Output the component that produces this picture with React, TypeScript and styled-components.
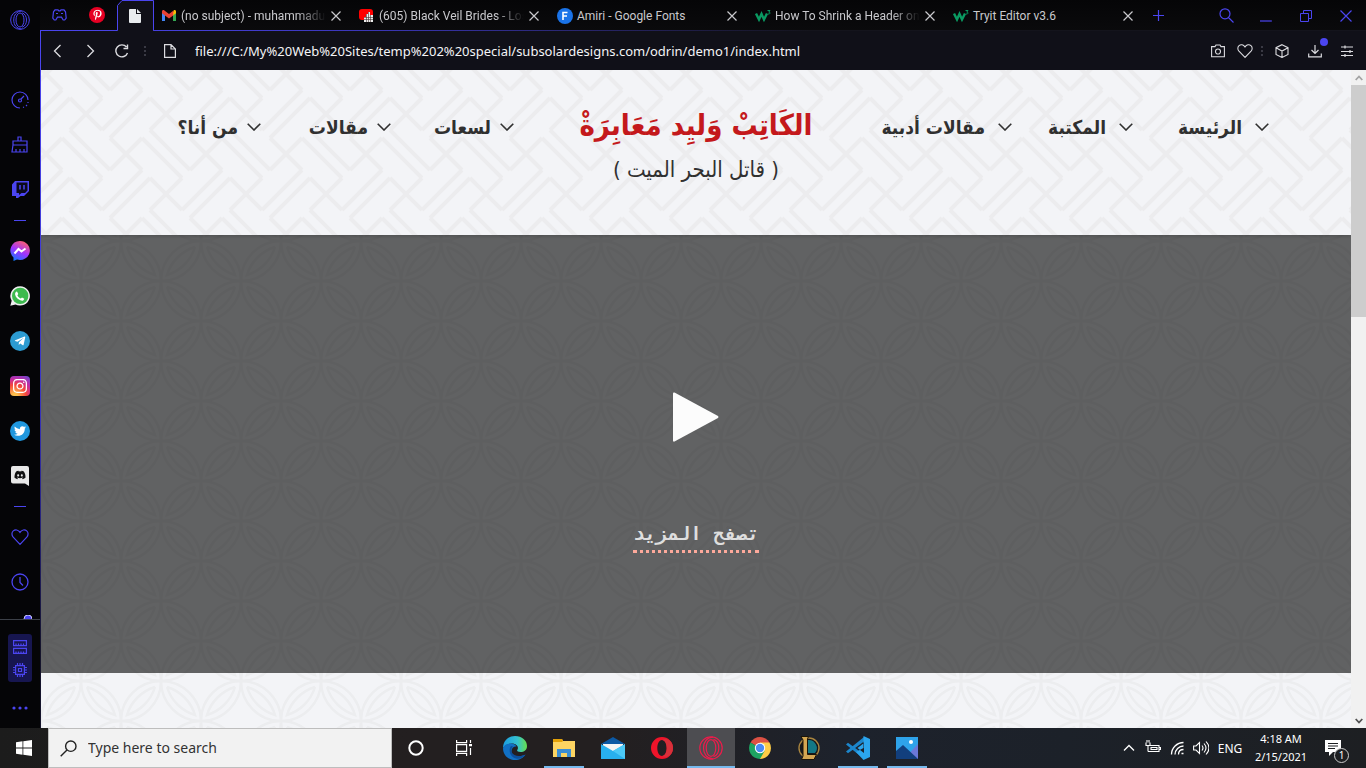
import React from "react";
import styled, { createGlobalStyle, css } from "styled-components";
import {
  FaWhatsapp, FaTelegramPlane, FaInstagram, FaTwitter, FaDiscord, FaPinterestP,
} from "react-icons/fa";

const ui = `"Noto Sans", "Open Sans", sans-serif`;
const violet = "#4b45f0";

const Global = createGlobalStyle`
  *, *::before, *::after { box-sizing: border-box; }
  html, body { margin: 0; height: 100%; background: #050507; }
  #root { height: 100%; }
  body { font-family: ${ui}; font-size: 12px; overflow: hidden; }
  button { font: inherit; color: inherit; background: none; border: 0; padding: 0; margin: 0; cursor: pointer; }
  svg { display: block; flex: none; }
  a { color: inherit; text-decoration: none; }
`;

const Screen = styled.div`display: flex; flex-direction: column; height: 100vh;`;
const Browser = styled.div`flex: 1; min-height: 0; display: flex;`;
const Main = styled.div`flex: 1; min-width: 0; display: flex; flex-direction: column;`;

/* ---------- sidebar ---------- */
const Sidebar = styled.aside`
  width: 41px; flex: none; display: flex; flex-direction: column; color: ${violet};
  background: linear-gradient(#4b45f0, #3a35c8 50%, #15142c 85%) right 0 top 30px / 1px 100% no-repeat, #050507;
`;
const SideTop = styled.div`height: 77px; width: 40px; display: flex; justify-content: center; padding-top: 10px; flex: none;`;
const SideList = styled.nav`flex: 1; min-height: 0; overflow: hidden; width: 40px;`;
const SideButton = styled.button`display: flex; width: 40px; height: 45px; align-items: center; justify-content: center;`;
const Dash = styled.div`
  height: 16px; display: flex; align-items: center; justify-content: center;
  &::before { content: ""; width: 12px; height: 1px; background: ${violet}; }
`;
const SideFoot = styled.div`
  width: 40px; height: 109px; flex: none; border-top: 1px solid #3c4048; padding-top: 14px;
  display: flex; flex-direction: column; align-items: center;
`;
const GxPanel = styled.button`
  width: 24px; height: 48px; border-radius: 3px; background: #171650;
  display: flex; flex-direction: column; align-items: center; justify-content: center; gap: 9px;
`;
const More = styled.button`flex: 1; width: 40px; padding-top: 6px; display: flex; align-items: center; justify-content: center;`;
const Disc = styled.span<{ $bg: string; $square?: boolean }>`
  width: 20px; height: 20px; border-radius: ${(p) => (p.$square ? "4px" : "50%")}; background: ${(p) => p.$bg};
  display: flex; align-items: center; justify-content: center; color: #fff;
`;

/* ---------- tabs ---------- */
const TabStrip = styled.div`
  height: 31px; flex: none; display: flex; color: #c9c9cd; margin-left: -1px;
  background: linear-gradient(90deg, #4b45f0, #3b36b8 25%, #14141c 58%) bottom / 100% 1px no-repeat, linear-gradient(#050507, #0a0a0c);
`;
const Pinned = styled.button`width: 38px; height: 30px; display: flex; align-items: center; justify-content: center; color: ${violet};`;
const ActiveTab = styled(Pinned)`
  height: 31px; position: relative;
  > svg:first-child { position: absolute; inset: 0; }
  > svg:last-child { position: relative; }
`;
const Tab = styled.div`width: 198px; height: 31px; padding: 0 10px 0 7px; display: flex; align-items: center; gap: 4px; min-width: 0; flex: 0 1 198px;`;
const TabIcon = styled.span`width: 16px; flex: none; display: flex; justify-content: center;`;
const TabTitle = styled.span<{ $fade?: boolean }>`
  flex: 1; min-width: 0; white-space: nowrap; font: 12px/18px Roboto, ${ui};
  ${(p) => p.$fade && css`mask-image: linear-gradient(90deg, #000 80%, transparent);`}
`;
const IconButton = styled.button<{ $w?: number; $color?: string }>`
  width: ${(p) => p.$w ?? 12}px; color: ${(p) => p.$color ?? "inherit"};
  align-self: stretch; display: flex; align-items: center; justify-content: center; flex: none;
`;
const WindowButtons = styled.div`margin-left: auto; display: flex; color: ${violet};`;

const AddressBar = styled.div`height: 39px; flex: none; background: #101018; display: flex; align-items: center; color: #dcdce0; padding: 0 4px 0 1px;`;
const Url = styled.input`
  flex: 1; min-width: 0; background: none; border: 0; outline: 0; padding: 0; margin-left: 7px; color: #f4f4f6;
  font-family: ${ui}; font-size: 13px; line-height: 20px;
`;
const DownloadBadge = styled.span`position: relative; &::after { content: ""; position: absolute; top: -6px; right: -6px; width: 8px; height: 8px; border-radius: 50%; background: ${violet}; }`;

/* ---------- page ---------- */
const Viewport = styled.div`flex: 1; min-height: 0; display: flex;`;
const Page = styled.div`flex: 1; min-width: 0; background: #f3f4f7; overflow: hidden; display: flex; flex-direction: column;`;
const Backdrop = styled.svg`position: absolute; inset: 0; width: 100%; height: 100%;`;
const Header = styled.header`
  position: relative; z-index: 1; height: 165px; flex: none; display: grid; grid-template-columns: 1fr 232px 1fr; padding-top: 30px;
  color: #303030; box-shadow: 0 1px 4px rgba(0, 0, 0, 0.2);
`;
const Menu = styled.nav<{ $side: "left" | "right" }>`
  position: relative; display: flex; gap: 47px; height: 54px; align-items: center; direction: ltr;
  ${(p) => (p.$side === "left" ? css`justify-content: flex-end; padding-right: 66px;` : css`padding-left: 64px;`)}
`;
const MenuLink = styled.a<{ $w: number; $wide?: boolean }>`
  width: ${(p) => p.$w}px; display: flex; align-items: center; justify-content: flex-end; gap: ${(p) => (p.$wide ? 13 : 9)}px;
  font: bold 19px/30px "DejaVu Sans Condensed", "DejaVu Sans", sans-serif; white-space: nowrap;
`;
const Brand = styled.a`position: relative; display: flex; flex-direction: column; align-items: center; white-space: nowrap;`;
const BrandName = styled.span`font: bold 29px/50px "DejaVu Sans Condensed", "DejaVu Sans", sans-serif; color: #c4191c;`;
const BrandSub = styled.span`font: 22px/40px "DejaVu Sans Condensed", "DejaVu Sans", sans-serif;`;
const Content = styled.main`position: relative; flex: 1; min-height: 0;`;
const Hero = styled.section`
  position: relative; height: 438px; background: rgba(0, 0, 0, 0.6);
  display: flex; flex-direction: column; align-items: center; padding-top: 157px; gap: 74px;
`;
const MoreLink = styled.a`
  font: bold 19px/34px "DejaVu Sans Mono", monospace; color: #dedede; border-bottom: 3px dotted #fda99b; white-space: nowrap;
`;
const Scrollbar = styled.div`width: 15px; flex: none; background: #f1f1f1; display: flex; flex-direction: column; color: #a3a3a3;`;
const ScrollArrow = styled.button<{ $dark?: boolean }>`
  height: 15px; display: flex; align-items: center; justify-content: center; color: ${(p) => (p.$dark ? "#505050" : "inherit")};
`;
const Track = styled.div`flex: 1; &::before { content: ""; display: block; height: 37%; background: #cdcdcd; }`;

/* ---------- taskbar ---------- */
const Taskbar = styled.footer`
  height: 40px; flex: none; display: flex; color: #fff;
  background: linear-gradient(90deg, #1c1c1c, #231f20 30%, #231f20 45%, #1d222c 62%, #1c2129 78%, #1d1f22);
`;
const StartButton = styled.button`width: 48px; display: flex; align-items: center; justify-content: center;`;
const SearchBox = styled.label`
  width: 344px; background: #f2f2f2; border: 1px solid #bdbdbd; display: flex; align-items: center; padding-left: 11px; gap: 11px; color: #222;
`;
const SearchInput = styled.input`
  flex: 1; min-width: 0; border: 0; outline: 0; padding: 0; background: none; font: 14px/20px ${ui};
  &::placeholder { color: #333; opacity: 1; }
`;
const Apps = styled.div`display: flex; gap: 1px; margin-left: 3px;`;
const AppButton = styled.button<{ $open?: boolean; $active?: boolean }>`
  width: 48px; position: relative; display: flex; align-items: center; justify-content: center;
  background: ${(p) => (p.$active ? "#4d4d51" : "none")};
  ${(p) => (p.$open || p.$active) && css`
    &::after { content: ""; position: absolute; bottom: 0; height: 2px; left: ${p.$active ? 0 : 4}px; right: ${p.$active ? 0 : 4}px; background: #76b9ed; }
  `}
`;
const Tray = styled.div`margin-left: auto; display: flex; align-items: center; padding-right: 15px;`;
const TrayButton = styled.button<{ $w: number }>`width: ${(p) => p.$w}px; height: 40px; display: flex; align-items: center; justify-content: center; position: relative;`;
const Clock = styled.button`width: 68px; font-size: 11px; line-height: 18px; text-align: center; white-space: nowrap;`;
const Count = styled.span`
  position: absolute; right: 2px; bottom: 5px; width: 15px; height: 15px; border-radius: 50%; background: #1d1f22; border: 1px solid #ccc;
  font-size: 10px; line-height: 13px; text-align: center;
`;

/* ---------- drawings ---------- */
type LineProps = { d: string; size?: number; w?: number; box?: number };
const Line = ({ d, size = 16, w = 1, box }: LineProps) => (
  <svg width={size} height={size} viewBox={`0 0 ${box ?? size} ${box ?? size}`} fill="none" stroke="currentColor" strokeWidth={w}><path d={d} /></svg>
);
const Cross = ({ size = 10 }: { size?: number }) => <Line size={size} d={`M.5 .5 L${size - 0.5} ${size - 0.5} M${size - 0.5} .5 L.5 ${size - 0.5}`} w={1.2} />;
const Chevron = () => (
  <svg width="14" height="8" viewBox="0 0 14 8" fill="none" stroke="#303030" strokeWidth="1.6"><path d="M.7.7 7 7 13.3.7" /></svg>
);
const GxLogo = ({ size, color }: { size: number; color: string }) => (
  <svg width={size} height={size} viewBox="0 0 24 24" fill="none" stroke={color} strokeWidth="1.2">
    <circle cx="12" cy="12" r="11.2" /><ellipse cx="12" cy="12" rx="4.800" ry="8.400" />
    <path d="M14 1.200C8 1.500 4.500 6 4.500 12S8 22.500 14 22.800M14.500 3.400c3.500 1 5.300 4.600 5.300 8.600s-1.800 7.600-5.300 8.600" />
  </svg>
);
const Heart = ({ size }: { size: number }) => <Line size={size} box={18} w={1.2} d="M9 16.300 2.200 9.200C.4 7.200.6 4.300 2.300 2.900 4.300 1.200 7.300 1.700 9 4.400c1.700-2.700 4.700-3.200 6.700-1.500 1.700 1.400 1.900 4.300.1 6.300Z" />;
const Colon = ({ width }: { width: number }) => <svg width={width} height="12" viewBox={`${1 - width / 2} 0 ${width} 12`} fill="#3a3a44"><path d="M0 1h2v2H0zM0 5h2v2H0zM0 9h2v2H0z" /></svg>;
const W3 = () => (
  <svg width="16" height="14" viewBox="0 0 16 14" fill="none" stroke="#0a9a62">
    <path d="M1 4.500 4 10.500 6.500 5 9 10.500 12 4.500" strokeWidth="2.400" /><path d="M12.500 1.500h2.500l-1.200 1.600c1.800 0 1.800 2.200-.9 1.900" strokeWidth="1" />
  </svg>
);
const Gmail = () => (
  <svg width="14" height="11" viewBox="0 0 14 11"><path d="M0 1.500V11h3V5z" fill="#4285f4" /><path d="M14 1.500V11h-3V5z" fill="#34a853" /><path d="M11 2.500V5.500L14 3.300V1.500C14 .2 12.500-.4 11.600.5z" fill="#fbbc04" /><path d="M0 1.500C0 .2 1.500-.4 2.400.5L7 4l4.200-3.200V5.500L7 8.600 0 3.300z" fill="#ea4335" /></svg>
);
const YouTube = () => (
  <svg width="16" height="14" viewBox="0 0 16 14"><rect width="14" height="11" rx="3" fill="#f00" /><path d="M5 13V8h2V5h2V3h2v3h3v7z" fill="#eee" /><path d="M5 8.500h9M5 10.500h9M7.500 5v8M9.500 3v10M11.500 6v7" stroke="#433" strokeWidth=".6" /></svg>
);

/* One hooked cross and its mirror image, repeated on a diagonal lattice, give the interlocking key fret. */
const fret = "M-16-16 16 16M16-16-16 16M16 16 56-24M16-16-24-56M-16-16-56 24M-16 16 24 56";
const fretMirror = "M24 24 56 56M56 24 24 56";
const Weave = () => (
  <Backdrop aria-hidden="true">
    <defs>
      <pattern id="weave" width="80" height="80" patternUnits="userSpaceOnUse" patternTransform="translate(45 44)">
        <g fill="none" stroke="#ececee" strokeWidth="4">
          {[0, 80].flatMap((x) => [0, 80].map((y) => <path key={`${x}-${y}`} d={fret} transform={`translate(${x} ${y})`} />))}
          <path d={fretMirror} />
        </g>
      </pattern>
    </defs>
    <rect width="100%" height="100%" fill="url(#weave)" />
  </Backdrop>
);
const Petals = () => (
  <Backdrop aria-hidden="true">
    <defs>
      <pattern id="petals" width="80" height="80" patternUnits="userSpaceOnUse" patternTransform="translate(0 6)">
        <g fill="none" stroke="#ecedef" strokeWidth="2.500">
          {[[0, 0, 0], [40, 40, 90], [80, 0, 90], [40, 40, 0]].map(([x, y, r], i) => (
            <g key={i} transform={`translate(${x} ${y}) rotate(${r})`}>
              <path d="M0 0A40 40 0 0 1 40 40A40 40 0 0 1 0 0M6 6A42 42 0 0 1 34 34A42 42 0 0 1 6 6" />
            </g>
          ))}
        </g>
      </pattern>
    </defs>
    <rect width="100%" height="100%" fill="url(#petals)" />
  </Backdrop>
);

const tabs = [
  { title: "(no subject) - muhammadu", icon: <Gmail />, fade: true },
  { title: "(605) Black Veil Brides - Los", icon: <YouTube />, fade: true },
  { title: "Amiri - Google Fonts", icon: <svg width="16" height="16" viewBox="0 0 16 16"><circle cx="8" cy="8" r="8" fill="#1a73e8" /><path d="M6 12V4.500h4.500M6 8h4" stroke="#fff" strokeWidth="1.600" fill="none" /></svg> },
  { title: "How To Shrink a Header on", icon: <W3 />, fade: true },
  { title: "Tryit Editor v3.6", icon: <W3 /> },
];

export default function App() {
  return (
    <Screen>
      <Global />
      <Browser>
        <Sidebar>
          <SideTop><GxLogo size={20} color={violet} /></SideTop>
          <SideList aria-label="Sidebar">
            <SideButton aria-label="Speed dial"><Line size={18} w={1.2} d="M9 17A8 8 0 1 1 17 9M17 11v1M16 14l-1 1M13 16l-1 .5M10 8l3-3M10.500 9.500a1.500 1.500 0 1 1-3 0a1.500 1.500 0 0 1 3 0" /></SideButton>
            <SideButton aria-label="Cleaner"><Line size={18} w={1.2} d="M7 5V1h3v4M2 5h14v4H2zM2 9 1 16h15V9M5 16v-3M9 16v-3M13 16v-3" /></SideButton>
            <SideButton aria-label="Twitch">
              <svg width="17" height="17" viewBox="0 0 17 17"><path d="M3 0h14v10l-5 5H8.500L6 17H4v-2H0V3.500z" fill={violet} /><path d="M4.500 1.500h11v8L13 12H9.500L7 14v-2H4.500z" fill="#0b0a1c" /><path d="M8 4v4.500M12 4v4.500" stroke={violet} strokeWidth="1.500" /></svg>
            </SideButton>
            <Dash />
            <SideButton aria-label="Messenger">
              <svg width="20" height="20" viewBox="0 0 20 20"><defs><linearGradient id="ms" x1=".2" y1="1" x2=".7" y2="0"><stop stopColor="#0a7cff" /><stop offset=".5" stopColor="#a033ff" /><stop offset="1" stopColor="#ff5f70" /></linearGradient></defs><path d="M10 0a10 9.500 0 1 1-3 18.600L3.500 20V16.500A9.500 9.500 0 0 1 10 0" fill="url(#ms)" /><path d="m4.500 12.500 4-4.500 3 2.500 4-3" stroke="#fff" strokeWidth="2" fill="none" /></svg>
            </SideButton>
            <SideButton aria-label="WhatsApp">
              <svg width="20" height="20" viewBox="0 0 20 20"><path d="M10.200.2a9.700 9.700 0 1 1-4.700 18.200L.3 19.800 1.700 14.800A9.700 9.700 0 0 1 10.200.2" fill="#eee" /><circle cx="10.200" cy="9.900" r="8.200" fill="#3dba4e" /><path d="M7 5.500 8.300 8l-.9 1.200c.8 1.700 1.800 2.600 3.400 3.300l1.200-1 2.300 1.200c-.3 1.600-1.700 2.300-3.300 1.900-3-.8-5.400-3.300-5.900-6C4.900 7 5.700 5.700 7 5.500" fill="#fff" /></svg>
            </SideButton>
            <SideButton aria-label="Telegram"><Disc $bg="#2c9bd1"><FaTelegramPlane size={12} /></Disc></SideButton>
            <SideButton aria-label="Instagram"><Disc $square $bg="radial-gradient(circle at 25% 100%, #fdc04d 10%, #f5463c 45%, #c32aa3 68%, #5b4fd6)"><FaInstagram size={16} /></Disc></SideButton>
            <SideButton aria-label="Twitter"><Disc $bg="#1f97de"><FaTwitter size={12} /></Disc></SideButton>
            <SideButton aria-label="Discord">
              <svg width="18" height="20" viewBox="0 0 18 20"><path d="M2 0h14a2 2 0 0 1 2 2v18l-4-2.500H2a2 2 0 0 1-2-2V2a2 2 0 0 1 2-2" fill="#e8e8e8" /><g transform="translate(3 3)"><FaDiscord size={12} color="#111" /></g></svg>
            </SideButton>
            <Dash />
            <SideButton aria-label="Favourites"><Heart size={18} /></SideButton>
            <SideButton aria-label="History"><Line size={18} w={1.3} d="M17 9A8 8 0 1 1 1 9a8 8 0 0 1 16 0M9 4v5.500l3 3" /></SideButton>
            <SideButton aria-label="Downloads">
              <svg width="24" height="24" viewBox="0 0 24 24"><path d="M11 4v14m-4-4 4 4 4-4" stroke={violet} fill="none" /><circle cx="20" cy="4" r="4" fill="#4b45f0" stroke="#c8c8f0" /></svg>
            </SideButton>
          </SideList>
          <SideFoot>
            <GxPanel aria-label="GX Control">
              <Line size={14} w={1.2} d="M.6.6h12.800v5H.6zM.6 8.400h12.800v5H.6zM3 5.500v-2M5.500 5.500v-2M8 5.500v-2M10.500 5.500v-2M3 13.500v-2M5.500 13.500v-2M8 13.500v-2M10.500 13.500v-2" />
              <Line size={14} w={1.2} d="M2.600 2.600h8.800v8.800H2.600zM5.500 5.500h3v3h-3zM4.500 0v2.500M7 0v2.500M9.500 0v2.500M4.500 11.500V14M7 11.500V14M9.500 11.500V14M0 4.500h2.500M0 7h2.500M0 9.500h2.500M11.500 4.500H14M11.500 7H14M11.500 9.500H14" />
            </GxPanel>
            <More aria-label="More"><svg width="16" height="4" fill={violet}><circle cx="2" cy="2" r="1.600" /><circle cx="8" cy="2" r="1.600" /><circle cx="14" cy="2" r="1.600" /></svg></More>
          </SideFoot>
        </Sidebar>

        <Main>
          <TabStrip>
            <Pinned aria-label="GX Corner">
              <svg width="15" height="12" viewBox="0 0 15 12" fill="none" stroke="currentColor" strokeWidth="1.200"><path d="M3 .8h3l.8 1h1.400l.8-1h3l1.500 2 .7 6.200-1.500 2h-1.500L9.500 8.200h-4L3.800 11H2.300L.8 9l.7-6.200zM4 4.500h2M9 4.500h2" /></svg>
            </Pinned>
            <Pinned aria-label="Pinterest"><svg width="16" height="16" viewBox="0 0 16 16"><circle cx="8" cy="8" r="8" fill="#e60023" /><g transform="translate(3 2.500)"><FaPinterestP size={11} color="#fff" /></g></svg></Pinned>
            <ActiveTab aria-label="index.html">
              <svg width="38" height="31" viewBox="0 0 38 31"><path d="M1 31V5.500L5.500.5H37.500V31" fill="#101018" /><path d="M0 30.500h1.500V5.500L6 .5H37.500v30H38" fill="none" stroke={violet} /></svg>
              <svg width="12" height="14" viewBox="0 0 12 14"><path d="M1 0h6v5h5v8a1 1 0 0 1-1 1H1a1 1 0 0 1-1-1V1a1 1 0 0 1 1-1M8 0l4 4H8z" fill="#e9ecef" /></svg>
            </ActiveTab>
            {tabs.map((t) => (
              <Tab key={t.title}>
                <TabIcon>{t.icon}</TabIcon>
                <TabTitle $fade={t.fade}>{t.title}</TabTitle>
                <IconButton aria-label="Close tab"><Cross /></IconButton>
              </Tab>
            ))}
            <IconButton $w={29} $color={violet} aria-label="New tab"><Line size={11} w={1.200} d="M5.500 0v11M0 5.500h11" /></IconButton>
            <WindowButtons>
              <IconButton $w={40} aria-label="Search tabs"><Line size={15} w={1.2} d="M11 5.800a5 5 0 1 1-10 0a5 5 0 0 1 10 0M9.500 9.500 14.500 14.500" /></IconButton>
              <IconButton $w={40} aria-label="Minimise"><Line size={12} w={1.2} d="M0 11h12" /></IconButton>
              <IconButton $w={40} aria-label="Restore"><Line size={12} d="M.5 3.500h8v8h-8zM3.500 3.500v-3h8v8h-3" /></IconButton>
              <IconButton $w={40} aria-label="Close"><Cross size={12} /></IconButton>
            </WindowButtons>
          </TabStrip>

          <AddressBar>
            <IconButton $w={32} aria-label="Back"><Line size={14} w={1.3} d="M9.500 1 3.500 7l6 6" /></IconButton>
            <IconButton $w={32} aria-label="Forward"><Line size={14} w={1.3} d="M4.500 1l6 6-6 6" /></IconButton>
            <IconButton $w={32} aria-label="Reload"><Line size={14} w={1.4} d="M12.500 9A6 6 0 1 1 11.500 3M12.500.5V4.500H8.500" /></IconButton>
            <Colon width={14} />
            <IconButton $w={36} aria-label="Page information"><Line size={14} w={1.2} d="M1.600.6h6.400l4.400 4.400v8.400H1.600zM8 .6V5h4.400" /></IconButton>
            <Url aria-label="Address" defaultValue="file:///C:/My%20Web%20Sites/temp%202%20special/subsolardesigns.com/odrin/demo1/index.html" />
            <IconButton $w={28} aria-label="Snapshot"><Line size={14} w={1.1} d="M.6 2.600h3.400l1-1.600h4l1 1.600h3.400v10.200H.6zM9.500 7.500a2.500 2.500 0 1 1-5 0a2.500 2.500 0 0 1 5 0" /></IconButton>
            <IconButton $w={26} aria-label="Bookmark"><Heart size={16} /></IconButton>
            <Colon width={8} />
            <IconButton $w={32} aria-label="Extensions"><Line size={14} w={1.1} d="M7 .7l6 3v6.800l-6 3-6-3V3.700zM1 3.700l6 3.300 6-3.300M7 7v6.500" /></IconButton>
            <IconButton $w={34} aria-label="Downloads"><DownloadBadge><Line size={14} w={1.200} d="M7 1v8.500M3.500 6 7 9.500 10.500 6M.7 9.500v3.400h12.600V9.500" /></DownloadBadge></IconButton>
            <IconButton $w={30} aria-label="Easy setup"><Line size={12} d="M0 2h12M0 6.500h12M0 10.500h12M4 .5v3M9 5v3M4 9v3" w={1.200} /></IconButton>
          </AddressBar>

          <Viewport>
            <Page lang="ar">
              <Header>
                <Weave />
                <Menu $side="left">
                  <MenuLink href="#about" $w={80}>من أنا؟<Chevron /></MenuLink>
                  <MenuLink href="#articles" $w={83}>مقالات<Chevron /></MenuLink>
                  <MenuLink href="#stings" $w={76}>لسعات<Chevron /></MenuLink>
                </Menu>
                <Brand href="#home"><BrandName>الكَاتِبْ وَليِد مَعَابِرَةْ</BrandName><BrandSub dir="rtl">( قاتل البحر الميت )</BrandSub></Brand>
                <Menu $side="right">
                  <MenuLink href="#literary" $w={136} $wide>مقالات أدبية<Chevron /></MenuLink>
                  <MenuLink href="#library" $w={74} $wide>المكتبة<Chevron /></MenuLink>
                  <MenuLink href="#main" $w={89} $wide>الرئيسة<Chevron /></MenuLink>
                </Menu>
              </Header>
              <Content>
                <Petals />
                <Hero>
                  <button aria-label="Play"><svg width="46" height="50" viewBox="0 0 46 50"><path d="M0 1.500Q0 0 1.500.5L45 24Q46 25 45 26L1.500 49.500Q0 50 0 48.500z" fill="#fcfcfc" /></svg></button>
                  <MoreLink href="#more" dir="rtl">تصفح المزيد</MoreLink>
                </Hero>
              </Content>
            </Page>
            <Scrollbar>
              <ScrollArrow aria-label="Scroll up"><Line size={8} w={1.800} d="M.7 6 4 2.500 7.300 6" /></ScrollArrow>
              <Track />
              <ScrollArrow aria-label="Scroll down" $dark><Line size={8} w={1.800} d="M.7 2 4 5.500 7.300 2" /></ScrollArrow>
            </Scrollbar>
          </Viewport>
        </Main>
      </Browser>

      <Taskbar>
        <StartButton aria-label="Start"><svg width="16" height="16" viewBox="0 0 16 16" fill="#fff"><path d="M0 2.200 6.500 1.300V7.600H0zM7.300 1.200 16 0v7.600H7.300zM0 8.400h6.500v6.300L0 13.800zM7.300 8.400H16V16l-8.700-1.200z" /></svg></StartButton>
        <SearchBox>
          <Line size={17} w={1.400} d="M16 6.200a5.200 5.200 0 1 1-10.400 0a5.200 5.200 0 0 1 10.400 0M7 10 .7 16.300" />
          <SearchInput aria-label="Search" placeholder="Type here to search" />
        </SearchBox>
        <StartButton aria-label="Cortana"><svg width="16" height="16"><circle cx="8" cy="8" r="6.700" fill="none" stroke="#fff" strokeWidth="2" /></svg></StartButton>
        <StartButton aria-label="Task view"><Line size={16} w={1.200} d="M.6 0v2.600h10V0M.6 4.600h10v6.800H.6zM.6 16v-2.600h10V16M14.500 0v3M14.500 8v7M13 4.600h3M13 5.600h3" /></StartButton>
        <Apps>
          <AppButton aria-label="Edge"><svg width="24" height="24" viewBox="0 0 24 24"><defs><linearGradient id="e1" x2="1"><stop stopColor="#1b9de2" /><stop offset=".6" stopColor="#35c1d0" /><stop offset="1" stopColor="#66e04c" /></linearGradient></defs><path d="M0 12C0 5 5 0 12 0s12 4.500 12 10c0 4-3 6-6.500 6-3 0-4-1-3-2.500C16 11 13.500 7.500 9 7.500 4 7.500 1 10 0 12" fill="url(#e1)" /><path d="M0 12c1-3 4-4.500 8-4.500 3 0 5 1.500 5.500 3C11 10 8.500 12 8.500 15c0 4 4 6 8 5.500 3-.4 5-1.500 6-2C20.500 22 16.500 24 12 24 5 24 0 19 0 12" fill="#1170c4" /><path d="M8 10c-3 4-1 11 5 12.500 4 .8 7.500-1 9.500-4-5 2.500-12 2-14-2.500-.7-2 0-4 1.500-5.500z" fill="#0c4f9c" /></svg></AppButton>
          <AppButton aria-label="File Explorer" $open><svg width="22" height="18" viewBox="0 0 22 18"><path d="M0 0h9l1 2h12v16H0z" fill="#fcd462" /><path d="M0 0h9l1 2-1 1H0z" fill="#e3a108" /><path d="M4 18v-8h14v8h-4v-4H8v4z" fill="#3b8ed4" /></svg></AppButton>
          <AppButton aria-label="Mail"><svg width="24" height="22" viewBox="0 0 24 22"><path d="M0 7 12 0l12 7z" fill="#0c59a4" /><path d="M2 7h20v8H2z" fill="#f4f4f4" /><path d="M0 7l12 7L24 7v15H0z" fill="#28b0ee" /><path d="M12 14 24 7v15z" fill="#4cc9f7" /></svg></AppButton>
          <AppButton aria-label="Opera"><svg width="22" height="22" viewBox="0 0 22 22"><path fillRule="evenodd" d="M11 0a11 11 0 1 1 0 22a11 11 0 0 1 0-22M11 3C8 3 6.300 7 6.300 11S8 19 11 19s4.700-4 4.700-8S14 3 11 3" fill="#f0142a" /><path d="M11 3c5-3 11 1 11 8s-6 11-11 8c3 0 4.700-4 4.700-8S14 3 11 3" fill="#d8303a" /></svg></AppButton>
          <AppButton aria-label="Opera GX" $active><GxLogo size={24} color="#ec1c4b" /></AppButton>
          <AppButton aria-label="Chrome"><svg width="22" height="22" viewBox="0 0 22 22"><path d="M11 11 1.500 5.500A11 11 0 0 1 20.500 5.500z" fill="#dd5144" /><path d="M11 11V5.500H20.500A11 11 0 0 1 11 22z" fill="#ffcd46" /><path d="M11 11 15.700 13.700 11 22A11 11 0 0 1 1.500 5.500z" fill="#1da462" /><circle cx="11" cy="11" r="5.200" fill="#fff" /><circle cx="11" cy="11" r="4.200" fill="#4a8af4" /></svg></AppButton>
          <AppButton aria-label="League of Legends"><svg width="22" height="24" viewBox="0 0 22 24"><circle cx="11" cy="12" r="10" fill="#16181c" stroke="#a8843f" strokeWidth="1.400" /><path d="M10 4a8 8 0 0 1 7 13h-7z" fill="#127886" /><path d="M3 .5h7.500L9.500 3v15.500h9l-2.500 5H3.500L5 20V4z" fill="#d3a652" stroke="#1b1408" /></svg></AppButton>
          <AppButton aria-label="Visual Studio Code" $open><svg width="24" height="24" viewBox="0 0 24 24"><path d="M0 8.500 2 6.700 18 18.500V23z" fill="#1c86cc" /><path d="M0 15.500 2 17.300 18 5.500V1z" fill="#1c86cc" /><path fillRule="evenodd" d="M17.500 0 24 3v18l-6.500 3L10 16l7.500-4z M18 7l-6.500 5 6.500 5z" fill="#2ba5ee" /></svg></AppButton>
          <AppButton aria-label="Photos" $open><svg width="22" height="22" viewBox="0 0 22 22"><path d="M0 0h22v22H0z" fill="#2ea3ea" /><path d="M22 7v15H8z" fill="#6b78d8" /><path d="M0 14l7-6 15 14H0z" fill="#123f7d" /><circle cx="15" cy="5" r="2" fill="#fff" /></svg></AppButton>
        </Apps>
        <Tray>
          <TrayButton $w={24} aria-label="Hidden icons"><Line size={12} w={1.300} d="M1 8.500 6 3.500l5 5" /></TrayButton>
          <TrayButton $w={24} aria-label="Battery"><Line size={16} w={1.100} d="M4 5.500h10v6H3M14 7.500h1.500v2H14M3 11.500v-2M1 2.500v3h4v-3M2 0v2.500M4 0v2.500M3 5.500v5M6 7.500h6v2H6z" /></TrayButton>
          <TrayButton $w={24} aria-label="Network"><Line size={14} w={1.300} d="M1.500 13.500C1.500 7 7 1.500 13.500 1.500M5 13.500C5 9 9 5 13.500 5M8.500 13.500c0-3 2-5 5-5M11.500 12.500h2" /></TrayButton>
          <TrayButton $w={24} aria-label="Volume"><Line size={16} w={1.100} d="M.6 6h2.400l3.500-3.500v11L3 10H.6zM9 5.500q2 2.500 0 5M11 3.500q4 4.500 0 9M13 1.500q6 6.500 0 13" /></TrayButton>
          <TrayButton $w={34} aria-label="Language">ENG</TrayButton>
          <Clock>4:18 AM<br />2/15/2021</Clock>
          <TrayButton $w={36} aria-label="Notifications">
            <svg width="16" height="16" viewBox="0 0 16 16"><path d="M0 0h16v12H8l-4 4v-4H0z" fill="#fff" /><path d="M3 3.500h10M3 6h10M3 8.500h7" stroke="#1d1f22" /></svg><Count>1</Count>
          </TrayButton>
        </Tray>
      </Taskbar>
    </Screen>
  );
}
